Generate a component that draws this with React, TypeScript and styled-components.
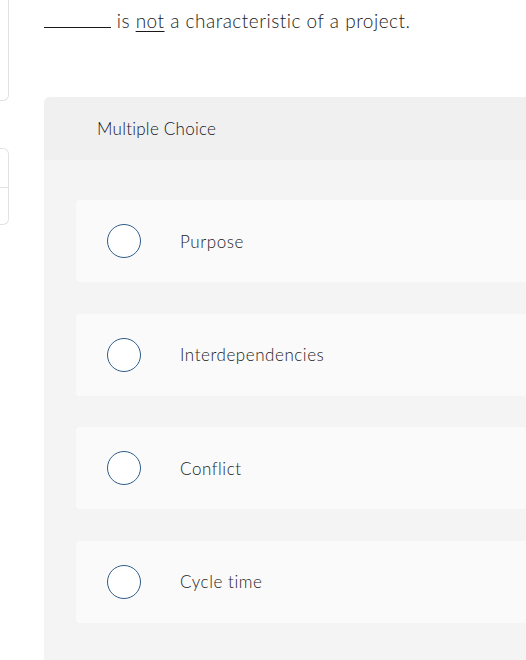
import styled, { createGlobalStyle } from "styled-components";

const GlobalStyle = createGlobalStyle`
    html, body {
        margin: 0;
        padding: 0;
        background: #ffffff;
        overflow: hidden;
    }
    body {
        font-family: Lato, "Open Sans", Arial, sans-serif;
        font-weight: 300;
        color: #1f1f1f;
    }
`;

const Page = styled.div`
    display: grid;
    grid-template-columns: 9px 1fr;
    column-gap: 35px;
    width: 1000px;
    height: 660px;
`;

const Sidebar = styled.aside`
    display: flex;
    flex-direction: column;
    gap: 47px;
`;

const SideCard = styled.div<{ $top?: boolean }>`
    display: flex;
    flex-direction: column;
    border: 1px solid #e2e2e2;
    border-left: none;
    border-radius: 0 6px 6px 0;
    margin-top: ${(p) => (p.$top ? "-10px" : "0")};
`;

const SideRow = styled.div<{ $h: number }>`
    height: ${(p) => p.$h}px;
    & + & {
        border-top: 1px solid #e2e2e2;
    }
`;

const Main = styled.main`
    display: flex;
    flex-direction: column;
`;

const Question = styled.p`
    margin: 0;
    padding-top: 7px;
    height: 97px;
    box-sizing: border-box;
    font-size: 19px;
    letter-spacing: 0.5px;
    line-height: 24px;
    color: #1a1a1a;
`;

const Blank = styled.span`
    display: inline-block;
    width: 67px;
    height: 20px;
    border-bottom: 1px solid #1a1a1a;
    vertical-align: baseline;
`;

const Emph = styled.span`
    text-decoration: underline;
    text-underline-offset: 3px;
`;

const Panel = styled.section`
    width: 620px;
    border-radius: 6px 0 0 0;
    overflow: hidden;
    background: #f4f4f4;
`;

const PanelHeader = styled.header`
    height: 63px;
    display: flex;
    align-items: center;
    padding-left: 53px;
    background: #f0f0f0;
    font-size: 17px;
    letter-spacing: 0.25px;
    color: #141428;
`;

const Options = styled.ul`
    list-style: none;
    margin: 0;
    padding: 40px 0 40px 32px;
    display: flex;
    flex-direction: column;
    gap: 31.5px;
`;

const Option = styled.li`
    height: 82px;
    display: flex;
    align-items: center;
    padding-left: 31px;
    background: #fafafa;
    border-radius: 4px 0 0 4px;
    font-size: 17px;
    letter-spacing: 0.55px;
    color: #1c1c1c;
`;

const Radio = styled.span`
    width: 34px;
    height: 34px;
    box-sizing: border-box;
    border-radius: 50%;
    border: 1.5px solid #2f5d8a;
    background: #ffffff;
    margin-right: 39px;
    flex: none;
`;

const choices = ["Purpose", "Interdependencies", "Conflict", "Cycle time"];

const App = () => {
    return (
        <>
            <GlobalStyle />
            <Page>
                <Sidebar>
                    <SideCard $top>
                        <SideRow $h={109} />
                    </SideCard>
                    <SideCard>
                        <SideRow $h={38} />
                        <SideRow $h={36} />
                    </SideCard>
                </Sidebar>
                <Main>
                    <Question>
                        <Blank /> is <Emph>not</Emph> a characteristic of a project.
                    </Question>
                    <Panel>
                        <PanelHeader>Multiple Choice</PanelHeader>
                        <Options>
                            {choices.map((c) => (
                                <Option key={c}>
                                    <Radio />
                                    {c}
                                </Option>
                            ))}
                        </Options>
                    </Panel>
                </Main>
            </Page>
        </>
    );
};

export default App;
